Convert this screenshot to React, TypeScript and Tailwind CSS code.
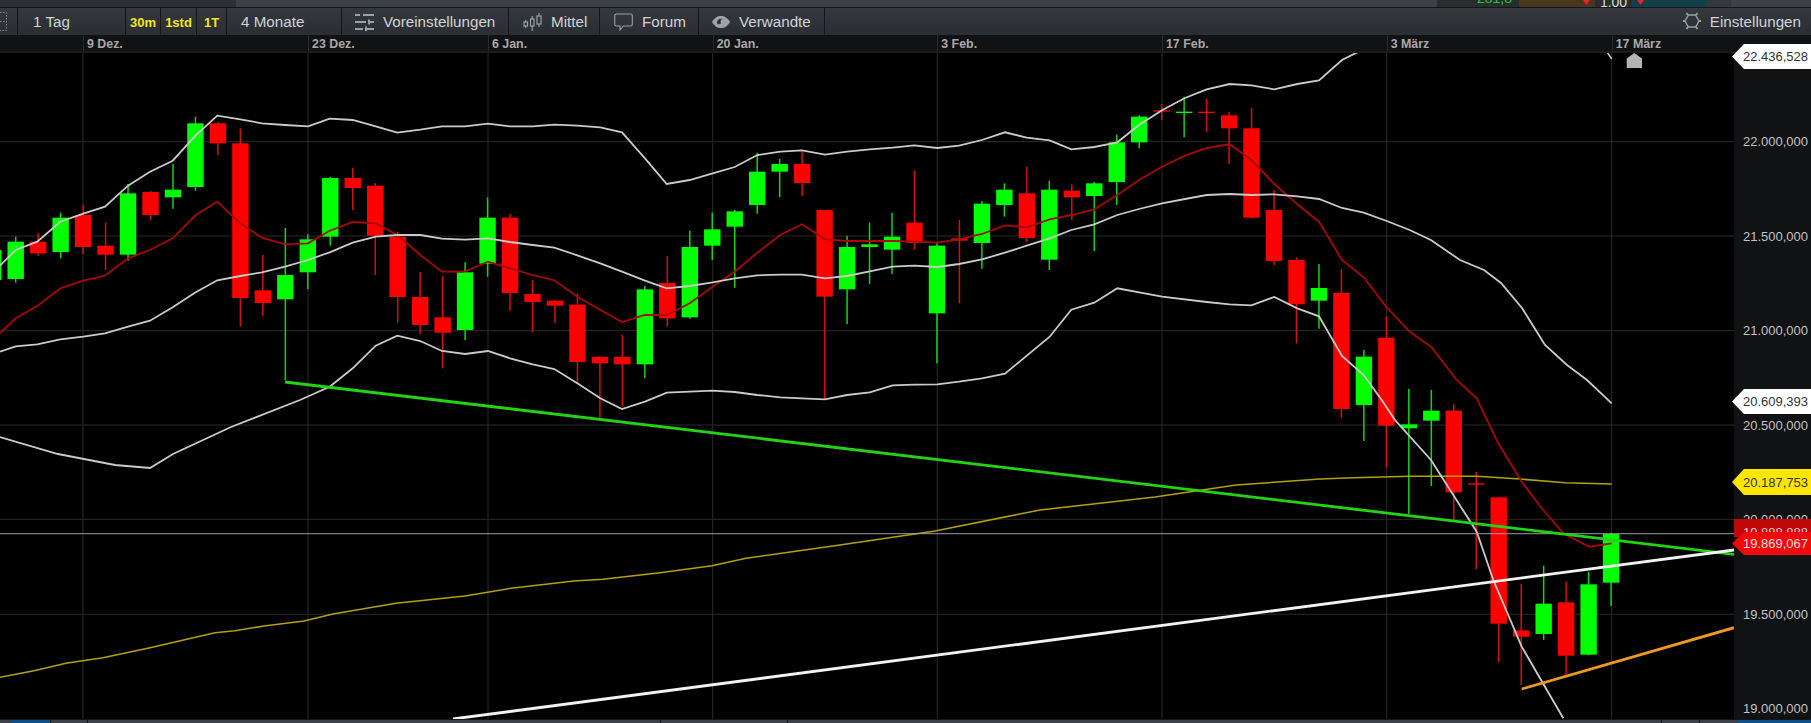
type Pt = [number, number];

// all chart numbers are read off 3x crops, crop() maps them back to page pixels
const crop = (ox: number, oy: number, flat: number[]): Pt[] => {
  const out: Pt[] = [];
  for (let i = 0; i < flat.length; i += 2) out.push([ox + flat[i] / 3, oy + flat[i + 1] / 3]);
  return out;
};
const toPath = (pts: Pt[]) => pts.map((p) => `${p[0].toFixed(1)},${p[1].toFixed(1)}`).join(" ");

// [wickTop, wickBottom, bodyTop, bodyBottom, green?]
const candles: [number, number, number, number, number][] = [
  [530, 668, 545, 657, 1], [520, 587, 545, 580, 0], [458, 595, 473, 576, 1], [435, 583, 465, 561, 0],
  [488, 630, 557, 584, 0], [372, 602, 400, 584, 1], [393, 480, 396, 465, 0], [312, 446, 389, 412, 1],
  [170, 392, 190, 381, 1], [185, 285, 190, 250, 0], [205, 800, 250, 714, 0], [585, 768, 691, 729, 0],
  [504, 960, 645, 718, 1], [523, 688, 538, 637, 1], [350, 557, 354, 530, 1], [323, 450, 354, 384, 0],
  [370, 645, 377, 527, 0], [516, 788, 530, 711, 0], [637, 822, 711, 795, 0], [649, 925, 772, 818, 0],
  [607, 840, 637, 810, 1], [412, 650, 473, 611, 1], [462, 752, 473, 699, 0], [660, 818, 702, 726, 0],
  [720, 788, 722, 737, 0], [700, 972, 734, 906, 0], [888, 1074, 891, 910, 0], [825, 1040, 891, 913, 0],
  [677, 955, 688, 913, 1], [588, 800, 669, 775, 0], [512, 776, 561, 772, 1], [458, 600, 508, 557, 1],
  [450, 683, 454, 500, 1], [278, 461, 335, 435, 1], [297, 411, 312, 335, 1], [277, 408, 312, 369, 0],
  [450, 1020, 450, 710, 0], [527, 792, 561, 688, 1], [488, 672, 553, 561, 1], [458, 642, 530, 569, 1],
  [331, 569, 488, 549, 0], [550, 910, 557, 760, 1], [480, 730, 535, 542, 0], [423, 626, 431, 549, 1],
  [370, 470, 389, 435, 1], [320, 546, 400, 534, 0], [362, 630, 389, 599, 1], [373, 480, 392, 412, 0],
  [366, 573, 370, 408, 1], [224, 435, 247, 366, 1], [166, 265, 170, 247, 1], [132, 180, 151, 155, 0],
  [110, 232, 155, 159, 1], [116, 216, 155, 159, 0], [155, 312, 166, 205, 0], [143, 475, 205, 473, 0],
  [390, 615, 450, 603, 0], [592, 850, 600, 733, 0], [612, 806, 684, 722, 1], [627, 1073, 699, 1047, 0],
  [870, 1143, 890, 1035, 1], [768, 1222, 833, 1097, 0], [987, 1362, 1093, 1105, 1], [990, 1278, 1052, 1082, 1],
  [1032, 1385, 1052, 1297, 0], [1236, 1528, 1270, 1274, 0], [1310, 1806, 1312, 1691, 0], [1572, 1875, 1711, 1730, 0],
  [1517, 1740, 1631, 1722, 1], [1564, 1853, 1627, 1787, 0], [1535, 1786, 1573, 1784, 1], [1418, 1638, 1422, 1568, 1],
];

const upperBand: Pt[] = [
  ...crop(0, 60, [0, 617, 47, 570, 112, 545, 181, 485, 250, 461, 315, 440, 384, 377, 450, 335, 518, 302, 587, 226, 652, 167, 721, 178, 786, 190, 855, 195, 924, 199, 989, 176, 1058, 180, 1127, 199, 1192, 218, 1261, 209, 1326, 199, 1395, 199]),
  ...crop(480, 60, [24, 191, 90, 199, 158, 199, 223, 194, 292, 197, 361, 202, 426, 217, 495, 295, 560, 372, 629, 360, 698, 340, 764, 321, 832, 285, 901, 275, 966, 271, 1035, 284, 1101, 275, 1169, 268, 1238, 263, 1303, 256, 1372, 264, 1437, 257]),
  ...crop(960, 60, [66, 240, 135, 217, 200, 233, 269, 241, 334, 268, 403, 261, 472, 247, 537, 195, 606, 151, 675, 114, 740, 88, 809, 72, 874, 76, 943, 88, 1012, 72, 1077, 61, 1146, 0]),
  [1358, 52],
];

const midBand: Pt[] = [
  ...crop(0, 60, [0, 875, 47, 859, 112, 853, 181, 838, 250, 830, 315, 820, 384, 800, 450, 782, 518, 742, 587, 697, 652, 661, 721, 648, 786, 637, 855, 620, 924, 600, 989, 577, 1058, 548, 1127, 530, 1192, 525, 1261, 525, 1326, 536, 1395, 539]),
  ...crop(480, 60, [24, 535, 90, 546, 158, 555, 223, 563, 292, 586, 361, 610, 426, 635, 495, 662, 560, 685, 629, 678, 698, 667, 764, 655, 832, 646, 901, 644, 966, 644, 1035, 655, 1101, 648, 1169, 634, 1238, 620, 1303, 617, 1372, 621, 1437, 612]),
  ...crop(960, 60, [66, 598, 135, 578, 200, 557, 269, 535, 334, 510, 403, 493, 472, 465, 537, 447, 606, 430, 675, 417, 740, 405, 809, 402, 874, 405, 943, 403, 1012, 409, 1077, 417, 1146, 444, 1211, 458, 1280, 483, 1349, 510, 1414, 541, 1500, 600]),
  [1484, 270], [1501, 283], [1522, 308], [1545, 345], [1567, 365], [1587, 380], [1611.7, 403.3],
];

const lowerBand: Pt[] = [
  [0, 437], [58, 454], [115, 465], [150, 468], [173, 454], [231, 427],
  ...crop(0, 60, [900, 1020, 989, 980, 1058, 925, 1127, 857, 1192, 827, 1261, 843, 1326, 873, 1395, 882]),
  ...crop(480, 60, [24, 873, 90, 895, 158, 913, 223, 927, 292, 970, 361, 1015, 426, 1047, 495, 1025, 560, 998, 629, 995, 698, 992, 764, 996, 832, 1005, 901, 1012, 966, 1015, 1035, 1018, 1101, 1005, 1169, 997, 1238, 976, 1303, 974, 1372, 973, 1437, 965]),
  ...crop(960, 60, [66, 955, 135, 941, 269, 830, 334, 749, 403, 728, 472, 685, 606, 710, 740, 726, 809, 733, 874, 736, 943, 711, 1012, 745, 1077, 769, 1146, 888, 1211, 945, 1265, 1020]),
  ...crop(1320, 380, [225, 120, 333, 240, 470, 455, 520, 600, 605, 800, 730, 1015]),
];

const redMa: Pt[] = [
  ...crop(0, 60, [0, 820, 47, 775, 112, 738, 181, 685, 250, 662, 315, 647, 384, 595, 450, 570, 518, 535, 587, 465, 652, 425, 721, 490, 786, 533, 855, 553, 924, 550, 989, 512, 1058, 486, 1127, 490, 1192, 525, 1261, 585, 1326, 635, 1395, 635]),
  ...crop(480, 60, [24, 605, 90, 625, 158, 645, 223, 661, 292, 710, 361, 750, 426, 786, 495, 765, 560, 765, 629, 730, 698, 680, 764, 635, 832, 578, 901, 525, 966, 493, 1035, 538, 1101, 543, 1169, 543, 1238, 543, 1303, 545, 1372, 548, 1437, 538]),
  ...crop(960, 60, [66, 522, 135, 496, 200, 502, 269, 478, 334, 465, 403, 448, 472, 405, 537, 360, 606, 320, 675, 287, 740, 264, 809, 253, 874, 300, 943, 372, 1012, 433, 1077, 485, 1146, 600, 1211, 652, 1280, 742, 1349, 815, 1414, 861]),
  ...crop(1320, 380, [410, 0, 470, 55, 535, 190, 605, 305, 665, 385, 730, 460, 808, 500, 875, 490]),
];

const yellowMa: Pt[] = [
  [0, 677.3], [34, 670.7], [66, 663.3], [103, 657.7], [149, 648], [215, 632.7], [235, 630.7], [264, 626], [304, 621],
  [333, 614], [396, 603.3], [465, 596], [511, 588.3], [574, 581], [603, 579.3], [660, 572.7], [712, 565.7], [746, 558.3],
  [840, 545], [935, 531], [1040, 510], [1155, 497], [1236, 485],
  [1320, 479], [1353, 477.7], [1410, 476.3], [1476.7, 476.3], [1520, 479], [1565, 482.7], [1611.7, 484],
];

const gridX = [83, 308, 488, 712.7, 937.3, 1162, 1386.7, 1611.7];
const gridY = [141.7, 236, 330.7, 425, 519.3, 614.3];

function Chart() {
  return (
    <svg width={1734} height={666} viewBox="0 53 1734 666" className="block shrink-0">
      {gridX.map((x) => <line key={x} x1={x} x2={x} y1={53} y2={719} stroke="#2a2a2a" strokeWidth={1} />)}
      {gridY.map((y) => <line key={y} x1={0} x2={1734} y1={y} y2={y} stroke="#2a2a2a" strokeWidth={1} />)}

      {/* partial candle cut off by the left edge */}
      <line x1={-7} x2={-7} y1={250} y2={299} stroke="#12d812" strokeWidth={1.5} />
      <rect x={-15} y={250} width={16.5} height={30} fill="#00ff00" />

      {candles.map((c, i) => {
        const x = 15.7 + i * 22.47;
        const y = (z: number) => 60 + z / 3;
        return (
          <g key={i}>
            <line x1={x} x2={x} y1={y(c[0])} y2={y(c[1])} stroke={c[4] ? "#10d810" : "#d81010"} strokeWidth={1.5} />
            <rect x={x - 8.2} y={y(c[2])} width={16.4} height={Math.max(y(c[3]) - y(c[2]), 1.3)} fill={c[4] ? "#00ff00" : "#ff0000"} />
          </g>
        );
      })}

      <polyline points={toPath(yellowMa)} fill="none" stroke="#b3a012" strokeWidth={1.6} />
      <polyline points={toPath(redMa)} fill="none" stroke="#a80808" strokeWidth={1.8} />
      <polyline points={toPath(upperBand)} fill="none" stroke="#cacaca" strokeWidth={1.8} />
      <polyline points={toPath(midBand)} fill="none" stroke="#cacaca" strokeWidth={1.8} />
      <polyline points={toPath(lowerBand)} fill="none" stroke="#cacaca" strokeWidth={1.8} />
      <line x1={1607} y1={52} x2={1611.7} y2={59} stroke="#c8c8c8" strokeWidth={1.5} />

      <line x1={0} x2={1734} y1={533.7} y2={533.7} stroke="#9c9c9c" strokeWidth={1} />
      <line x1={285} y1={382} x2={1734} y2={554.3} stroke="#24d414" strokeWidth={2.8} />
      <line x1={453} y1={719} x2={1734} y2={550} stroke="#f2f2f2" strokeWidth={2.8} />
      <line x1={1521.7} y1={689} x2={1734} y2={627.7} stroke="#ee9a1e" strokeWidth={2.8} />

      {/* now marker */}
      <polygon points="1626.7,68 1626.7,58.5 1634.3,53 1642,58.5 1642,68" fill="#b4b4b4" />
    </svg>
  );
}

function SlidersIcon() {
  return (
    <svg width={19} height={18} viewBox="0 0 19 18" fill="none" stroke="#9aa0a4" strokeWidth={2} className="shrink-0">
      <path d="M0 2h5M8 2h11M0 9h11M14 6.500v5M15 9h4M0 16h8M11 13.500v5M12 16h7" />
    </svg>
  );
}

function CandleIcon() {
  return (
    <svg width={19} height={18} viewBox="0 0 19 18" fill="none" stroke="#9aa0a4" strokeWidth={1.2} className="shrink-0">
      <rect x={1} y={9} width={3.5} height={4} />
      <path d="M2.700 7v2M2.700 13v2" />
      <rect x={7.5} y={6} width={3.5} height={7} />
      <path d="M9.200 3v3M9.200 13v5" />
      <rect x={14} y={3} width={4} height={8} />
      <path d="M16 0v3M16 11v3" />
    </svg>
  );
}

function BubbleIcon() {
  return (
    <svg width={19} height={18} viewBox="0 0 19 18" fill="none" stroke="#9aa0a4" strokeWidth={1.1} className="shrink-0">
      <path d="M2.500 1h14a1.800 1.800 0 0 1 1.800 1.800v8.400a1.800 1.800 0 0 1-1.800 1.800H9.500L6 17v-4H2.500A1.800 1.800 0 0 1 .7 11.200V2.800A1.800 1.800 0 0 1 2.500 1z" />
    </svg>
  );
}

function EyeIcon() {
  return (
    <svg width={18} height={12} viewBox="0 0 18 12" className="shrink-0">
      <path d="M0 6C3 1 6 0 9 0s6 1 9 6c-3 5-6 6-9 6S3 11 0 6z" fill="#a0a4a6" />
      <path d="M5 6.500C5 3.500 7.500 2.200 11 2.800 8.500 3.600 8 5.500 9 7.500c-1.500 1.500-4 .8-4-1z" fill="#2e3237" />
    </svg>
  );
}

function GearIcon() {
  return (
    <svg width={18} height={18} viewBox="0 0 18 18" fill="none" stroke="#9aa0a4" className="shrink-0">
      <path d="M5.500 3h7L16 9l-3.500 6h-7L2 9z" strokeWidth={1.3} />
      <path d="M5 3 3.500 1M13 3l1.500-2M16 9h2M13 15l1.500 2M5 15l-1.500 2M2 9H0" strokeWidth={1.8} />
    </svg>
  );
}

function ToolCell({ w, children }: { w: string; children: React.ReactNode }) {
  return <div className={`flex h-full shrink-0 items-center border-r border-[#14161a] ${w}`}>{children}</div>;
}

function PriceTag({ className, children }: { className: string; children: React.ReactNode }) {
  return (
    <div className={`absolute right-0 flex w-[79px] items-center justify-end pr-[3px] text-[13px] leading-none [clip-path:polygon(0_50%,12px_0,100%_0,100%_100%,12px_100%)] ${className}`}>
      {children}
    </div>
  );
}

const dates = [
  { label: "", w: "w-[83px]" },
  { label: "9 Dez.", w: "w-[225px]" },
  { label: "23 Dez.", w: "w-[180px]" },
  { label: "6 Jan.", w: "w-[224.7px]" },
  { label: "20 Jan.", w: "w-[224.6px]" },
  { label: "3 Feb.", w: "w-[224.7px]" },
  { label: "17 Feb.", w: "w-[224.7px]" },
  { label: "3 März", w: "w-[225px]" },
  { label: "17 März", w: "flex-1" },
];

const axisLabels = ["22.000,000", "21.500,000", "21.000,000", "20.500,000", "20.000,000", "19.500,000", "19.000,000"];

export default function App() {
  return (
    <div className="relative flex h-[723px] w-full flex-col overflow-hidden bg-black font-['Liberation_Sans',Arial,sans-serif]">
      {/* bit of the panel above */}
      <div className="flex h-[7px] shrink-0 bg-[#3c4149]">
        <div className="w-[236px] bg-[#2c2f34]" />
        <div className="w-[1201px]" />
        <div className="flex w-[82px] justify-end overflow-hidden bg-[#2a2d30] pr-[7px]">
          <span className="-mt-[9px] text-[14px] leading-none text-[#22c53a]">281,8</span>
        </div>
        <div className="flex w-[76px] justify-end bg-[#4a3720] pr-[5px]">
          <div className="h-[5px] w-[7px] bg-[#e8202a] [clip-path:polygon(0_0,100%_0,50%_100%)]" />
        </div>
        <div className="flex w-[37px] justify-center overflow-hidden bg-[#2a2d30]">
          <span className="-mt-[5px] text-[14px] leading-none text-[#d8d8d8]">1,00</span>
        </div>
        <div className="w-[75px] bg-[#123f4a] pl-[5px]">
          <div className="h-[5px] w-[7px] bg-[#e8202a] [clip-path:polygon(0_0,100%_0,50%_100%)]" />
        </div>
        <div className="w-[24px] bg-[#34383e]" />
      </div>
      <div className="h-px shrink-0 bg-[#14161a]" />

      {/* toolbar */}
      <div className="flex h-[27px] shrink-0 items-center bg-gradient-to-b from-[#35393e] to-[#2a2d32] text-[15.2px] text-[#cfd3d6]">
        <ToolCell w="w-[18px]">
          <svg width={7} height={19} viewBox="0 0 7 19" fill="none" stroke="#888" strokeWidth={1} strokeDasharray="1.5 1.5">
            <path d="M0 .5h6.500v18H0M0 9.500h6.500" />
          </svg>
        </ToolCell>
        <ToolCell w="w-[108px] pl-[15px] pt-[2px]">1 Tag</ToolCell>
        <ToolCell w="w-[35px] justify-center pt-[2px] text-[13px] font-bold text-[#f4e51e]">30m</ToolCell>
        <ToolCell w="w-[36px] justify-center pt-[2px] text-[13px] font-bold text-[#f4e51e]">1std</ToolCell>
        <ToolCell w="w-[30px] justify-center pt-[2px] text-[13px] font-bold text-[#f4e51e]">1T</ToolCell>
        <ToolCell w="w-[115px] pl-[14px] pt-[2px]">4 Monate</ToolCell>
        <ToolCell w="w-[167px] gap-[9px] pl-[13px]"><SlidersIcon /><span className="pt-[2px]">Voreinstellungen</span></ToolCell>
        <ToolCell w="w-[91px] gap-[9px] pl-[14px]"><CandleIcon /><span className="pt-[2px]">Mittel</span></ToolCell>
        <ToolCell w="w-[99px] gap-[9px] pl-[14px]"><BubbleIcon /><span className="pt-[2px]">Forum</span></ToolCell>
        <ToolCell w="w-[126px] gap-[9px] pl-[13px]"><EyeIcon /><span className="pt-[2px]">Verwandte</span></ToolCell>
        <div className="ml-auto flex items-center gap-[9px] pr-[10px]">
          <GearIcon />
          <span className="pt-[2px]">Einstellungen</span>
        </div>
      </div>

      {/* date axis */}
      <div className="flex h-[18px] shrink-0 border-b-2 border-[#1b1c1e] bg-[#111214] text-[12.4px] font-bold text-[#a9a9a9]">
        {dates.map((d, i) => (
          <div key={i} className={`h-full pl-[3px] leading-[18px] ${i > 0 ? "border-l border-[#2a2a2a]" : ""} ${d.w}`}>
            {d.label}
          </div>
        ))}
      </div>

      {/* chart + price axis */}
      <div className="flex h-[666px] shrink-0">
        <Chart />
        <div className="flex flex-1 flex-col bg-[#111214] pt-[41.5px] pl-[9px] text-[13px] text-[#c2c2c2]">
          {axisLabels.map((l) => (
            <div key={l} className="flex h-[94.5px] shrink-0 items-center leading-none">{l}</div>
          ))}
        </div>
      </div>

      {/* bottom edge */}
      <div className="flex h-[4px] shrink-0 border-t border-[#14161a] bg-[#3c4149]">
        <div className="w-[12px]" />
        <div className="w-[39px] border-r border-[#14161a] bg-[#0e4f8a]" />
        <div className="w-[37px] border-r border-[#14161a]" />
        <div className="w-[573px] border-r border-[#14161a]" />
        <div className="w-[127px] border-r border-[#14161a]" />
        <div className="w-[874px] border-r border-[#14161a]" />
        <div className="w-[38px] border-r border-[#14161a]" />
        <div className="w-[37px]" />
        <div className="flex-1 bg-[#0e4f8a]" />
      </div>

      {/* price tags over the axis */}
      <PriceTag className="top-[44px] h-[25px] bg-white text-[#333]">22.436,528</PriceTag>
      <PriceTag className="top-[389px] h-[25px] bg-white text-[#333]">20.609,393</PriceTag>
      <PriceTag className="top-[469px] h-[26px] bg-[#ffe600] text-[#333]">20.187,753</PriceTag>
      <div className="absolute top-[519px] right-0 flex h-[18px] w-[77px] justify-end overflow-hidden bg-[#c00808] pt-[7px] pr-[3px] text-[13px] leading-none text-[#e8c8c8]">
        19.888,888
      </div>
      <PriceTag className="top-[532px] h-[23px] bg-[#f00a0a] text-[#f4dcdc]">19.869,067</PriceTag>
    </div>
  );
}
